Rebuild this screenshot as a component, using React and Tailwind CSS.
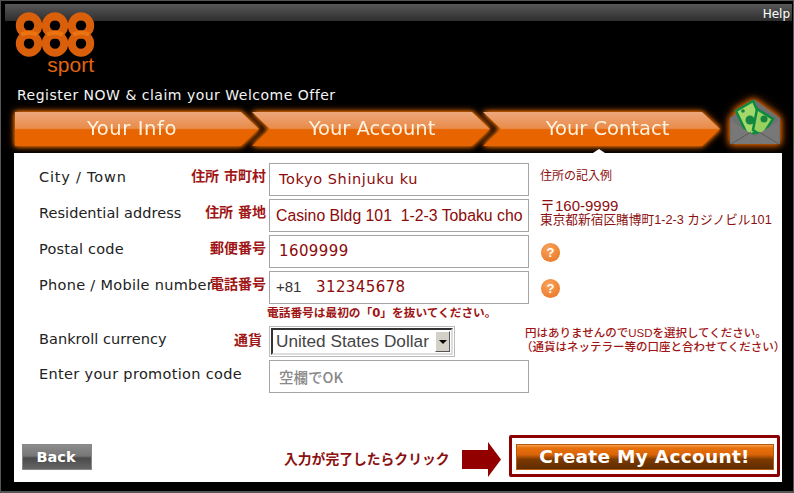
import React from 'react'

const CJK = "font-['DejaVu_Sans','Noto_Sans_CJK_JP',sans-serif]"

// 888 logo drawn from rings, the word below it stays text
const Logo = () => (
    <div className="relative z-10 -mt-[9px] w-[82px] h-[64px]">
        <svg width="82" height="46" viewBox="0 0 82 46" className="block overflow-visible">
            {[15, 41, 67].map((x) => (
                <g key={x} fill="none" stroke="#d95f0a" strokeWidth="8">
                    <circle cx={x} cy="13.5" r="9.2" />
                    <circle cx={x} cy="31.5" r="9.2" />
                    <path d={`M${x - 8} 22.5 Q${x} 19 ${x + 8} 22.5`} stroke="#ec7410" strokeWidth="4" />
                </g>
            ))}
        </svg>
        <span className="absolute right-[2px] top-[40px] text-[#e0650f] text-[21px] leading-[26px] font-['Liberation_Sans',sans-serif]">sport</span>
    </div>
)

const Tab = ({ label, widthClass, clipClass, textClass }) => (
    <div className={`h-[34px] [filter:drop-shadow(0_0_2px_#ff8000)_drop-shadow(0_0_3px_#c05000)] ${widthClass}`}>
        <div
            className={`h-full flex items-center justify-center text-[19.5px] text-[#fff3e0] font-['DejaVu_Sans',sans-serif] bg-[linear-gradient(#eda77c_0%,#e98c4a_48%,#e86400_52%,#e86400_100%)] ${clipClass} ${textClass}`}
        >
            {label}
        </div>
    </div>
)

const Envelope = () => (
    <svg width="52" height="48" viewBox="0 0 52 48" className="overflow-visible [filter:drop-shadow(0_0_3px_#ff7a00)_drop-shadow(0_0_4px_#a04000)]">
        <path d="M1 20 L26 2 L51 20 V46 H1 Z" fill="#707070" />
        <path d="M7 13 L24 3 L36 29 L19 38 Z" fill="#a5d86a" stroke="#0b8a42" strokeWidth="2.5" />
        <circle cx="21" cy="22" r="4.5" fill="#16853f" />
        <circle cx="14" cy="13" r="1.8" fill="#16853f" />
        <path d="M28 11 L44 21 L33 38 L24 32 Z" fill="#9ad060" stroke="#0b8a42" strokeWidth="2.5" />
        <circle cx="35" cy="21" r="3.5" fill="#16853f" />
        <path d="M2 23 L26 38 L50 23 V46 H2 Z" fill="#787878" />
        <path d="M2 46 L22 34 M50 46 L30 34" stroke="#5a5a5a" strokeWidth="1" fill="none" />
    </svg>
)

const HelpDot = () => (
    <div className="ml-[12px] mt-[8px] w-[19px] h-[19px] rounded-full flex items-center justify-center text-white text-[13px] font-bold font-['Liberation_Sans',sans-serif] bg-[radial-gradient(circle_at_40%_30%,#f9a35c,#e8701c)]">?</div>
)

const Row = ({ label, labelClass, jp, children, side }) => (
    <div className="flex h-[33px] mb-[3px]">
        <div className={`w-[150px] shrink-0 whitespace-nowrap text-[14.5px] leading-[28px] text-[#222] font-['DejaVu_Sans',sans-serif] ${labelClass}`}>{label}</div>
        <div className={`w-[77px] shrink-0 whitespace-nowrap text-right text-[14px] leading-[26px] font-semibold text-[#a01515] ${CJK}`}>{jp}</div>
        <div className="ml-[3px] w-[260px] shrink-0">{children}</div>
        {side}
    </div>
)

const Field = ({ children, className = '' }) => (
    <div className={`h-[33px] w-[260px] border border-[#a5a5a5] flex items-center whitespace-pre ${className}`}>{children}</div>
)

export default function App() {
    return (
        <div className="w-[794px] h-[493px] bg-black overflow-hidden border border-b-2 border-[#555] pt-[3px] flex flex-col font-['DejaVu_Sans',sans-serif]">
            <div className="ml-[4px] mr-[1px] h-[17px] shrink-0 bg-[linear-gradient(#585858,#2e2e2e)] flex justify-end pr-[2px] text-white text-[12px] leading-[20px]">Help</div>

            <div className="pl-[13px] flex-1 flex flex-col">
                <Logo />
                <div className="mt-[9px] ml-[3px] text-[14px] tracking-[0.5px] leading-[20px] text-[#f4f4f4] whitespace-nowrap">Register NOW &amp; claim your Welcome Offer</div>

                <div className="mt-[1px] ml-[1px] flex items-end h-[47px]">
                    <div className="flex h-[34px] mb-[7px]">
                        <Tab
                            label="Your Info"
                            widthClass="w-[244px]"
                            clipClass="[clip-path:polygon(0_0,calc(100%-18px)_0,100%_50%,calc(100%-18px)_100%,0_100%)]"
                            textClass="pr-[10px] tracking-[0.6px]"
                        />
                        <Tab
                            label="Your Account"
                            widthClass="w-[238px] ml-[-7px]"
                            clipClass="[clip-path:polygon(0_0,calc(100%-18px)_0,100%_50%,calc(100%-18px)_100%,0_100%,18px_50%)]"
                            textClass="pl-[2px]"
                        />
                        <Tab
                            label="Your Contact"
                            widthClass="w-[237px] ml-[-7px]"
                            clipClass="[clip-path:polygon(0_0,calc(100%-18px)_0,100%_50%,calc(100%-18px)_100%,0_100%,18px_50%)]"
                            textClass="pl-[12px]"
                        />
                    </div>
                    <div className="ml-[9px] mb-[7px]"><Envelope /></div>
                </div>

                {/* white form panel */}
                <div className="relative bg-white h-[329px] w-[768px] pl-[25px] pt-[10px]">
                    <div className="absolute left-[579px] top-[-4px] w-0 h-0 border-x-[6px] border-x-transparent border-b-[4px] border-b-white" />

                    <Row label="City / Town" labelClass="tracking-[0.8px]" jp="住所 市町村" side={<div className={`ml-[11px] text-[12px] leading-[26px] text-[#8b1010] ${CJK}`}>住所の記入例</div>}>
                        <Field className="pl-[9px] text-[14.5px] tracking-[0.6px] text-[#8b0a0a]">Tokyo Shinjuku ku</Field>
                    </Row>
                    <Row label="Residential address" labelClass="tracking-[0.05px]" jp="住所 番地" side={
                        <div className="ml-[11px] text-[12.7px] leading-[14px] text-[#8b1010] whitespace-nowrap font-['Liberation_Sans','Noto_Sans_CJK_JP',sans-serif]">
                            <div className="text-[15px]">〒160-9999</div>
                            <div>東京都新宿区賭博町1-2-3 カジノビル101</div>
                        </div>
                    }>
                        <Field className="pl-[6px] text-[15.8px] text-[#8b0a0a] font-['Liberation_Sans',sans-serif]">Casino Bldg 101  1-2-3 Tobaku cho</Field>
                    </Row>
                    <Row label="Postal code" labelClass="tracking-[0.18px]" jp="郵便番号" side={<HelpDot />}>
                        <Field className="pl-[9px] text-[15px] tracking-[0.4px] text-[#8b0a0a]">1609999</Field>
                    </Row>
                    <Row label="Phone / Mobile number" labelClass="tracking-[0.3px]" jp="電話番号" side={<HelpDot />}>
                        <Field className="pl-[6px]">
                            <span className="w-[40px] text-[15px] text-[#333] font-['Liberation_Sans',sans-serif]">+81</span>
                            <span className="text-[15px] tracking-[0.4px] text-[#8b0a0a]">312345678</span>
                        </Field>
                    </Row>

                    <div className={`-mt-[2px] ml-[228px] h-[20px] text-[11.7px] leading-[16px] font-semibold text-[#a01515] whitespace-nowrap ${CJK}`}>電話番号は最初の「0」を抜いてください。</div>

                    <div className="flex h-[34px] mt-[1px]">
                        <div className="w-[150px] shrink-0 text-[14.5px] tracking-[0.05px] leading-[26px] text-[#222]">Bankroll currency</div>
                        <div className={`w-[73px] shrink-0 text-right text-[14px] leading-[28px] font-semibold text-[#a01515] ${CJK}`}>通貨</div>
                        <div className="ml-[7px] w-[186px] h-[31px] shrink-0 border border-[#bbb] p-[1px]">
                            <div className="h-full border-2 border-t-[#333] border-l-[#333] border-r-[#ddd] border-b-[#ddd] flex items-center justify-between pl-[3px] pr-[1px]">
                                <span className="text-[17.2px] text-[#444] font-['Liberation_Sans',sans-serif] whitespace-nowrap">United States Dollar</span>
                                <div className="w-[15px] h-[21px] bg-[#d4d0c8] border border-t-white border-l-white border-r-[#555] border-b-[#555] flex items-center justify-center">
                                    <div className="w-0 h-0 border-x-[4px] border-x-transparent border-t-[4px] border-t-black" />
                                </div>
                            </div>
                        </div>
                        <div className="ml-[70px] text-[11.5px] leading-[14px] font-medium text-[#a01515] whitespace-nowrap font-['Liberation_Sans','Noto_Sans_CJK_JP',sans-serif]">
                            <div>円はありませんのでUSDを選択してください。</div>
                            <div className="-ml-[4px]">（通貨はネッテラー等の口座と合わせてください）</div>
                        </div>
                    </div>

                    <div className="flex h-[33px]">
                        <div className="w-[230px] shrink-0 text-[14.5px] tracking-[0.33px] leading-[28px] text-[#222]">Enter your promotion code</div>
                        <Field className="pl-[9px] text-[14.5px] font-medium text-[#888] font-['Noto_Sans_CJK_JP',sans-serif]">空欄でOK</Field>
                    </div>

                    {/* bottom actions */}
                    <div className="flex items-end -ml-[17px] mt-[42px]">
                        <button className="mb-[7px] w-[70px] h-[26px] border border-[#888] bg-[linear-gradient(#8c8c8c,#777_45%,#4a4a4a_55%,#666)] text-white text-[14.5px] font-bold leading-[20px] pr-[2px]">Back</button>
                        <div className={`ml-[192px] mb-[8px] text-[13.8px] leading-[20px] font-semibold text-[#8b1010] whitespace-nowrap ${CJK}`}>入力が完了したらクリック</div>
                        <svg width="39" height="35" viewBox="0 0 39 35" className="ml-[12px] shrink-0">
                            <path d="M0 8 H26 V0 L39 17.5 L26 35 V27 H0 Z" fill="#920000" />
                        </svg>
                        <div className="ml-[8px] w-[271px] h-[42px] shrink-0 border-[3px] border-[#8b0000] rounded-[2px] pt-[6px] pb-[4px] pl-[4px] pr-[3px] flex">
                            <button className="flex-1 border border-[#b35a10] bg-[linear-gradient(#f8a050,#e8700c_12%,#d96408_40%,#7c3a00_60%,#5e2c00)] text-white text-[18.5px] font-bold tracking-[0.3px] leading-none">Create My Account!</button>
                        </div>
                    </div>
                </div>
            </div>
        </div>
    )
}
